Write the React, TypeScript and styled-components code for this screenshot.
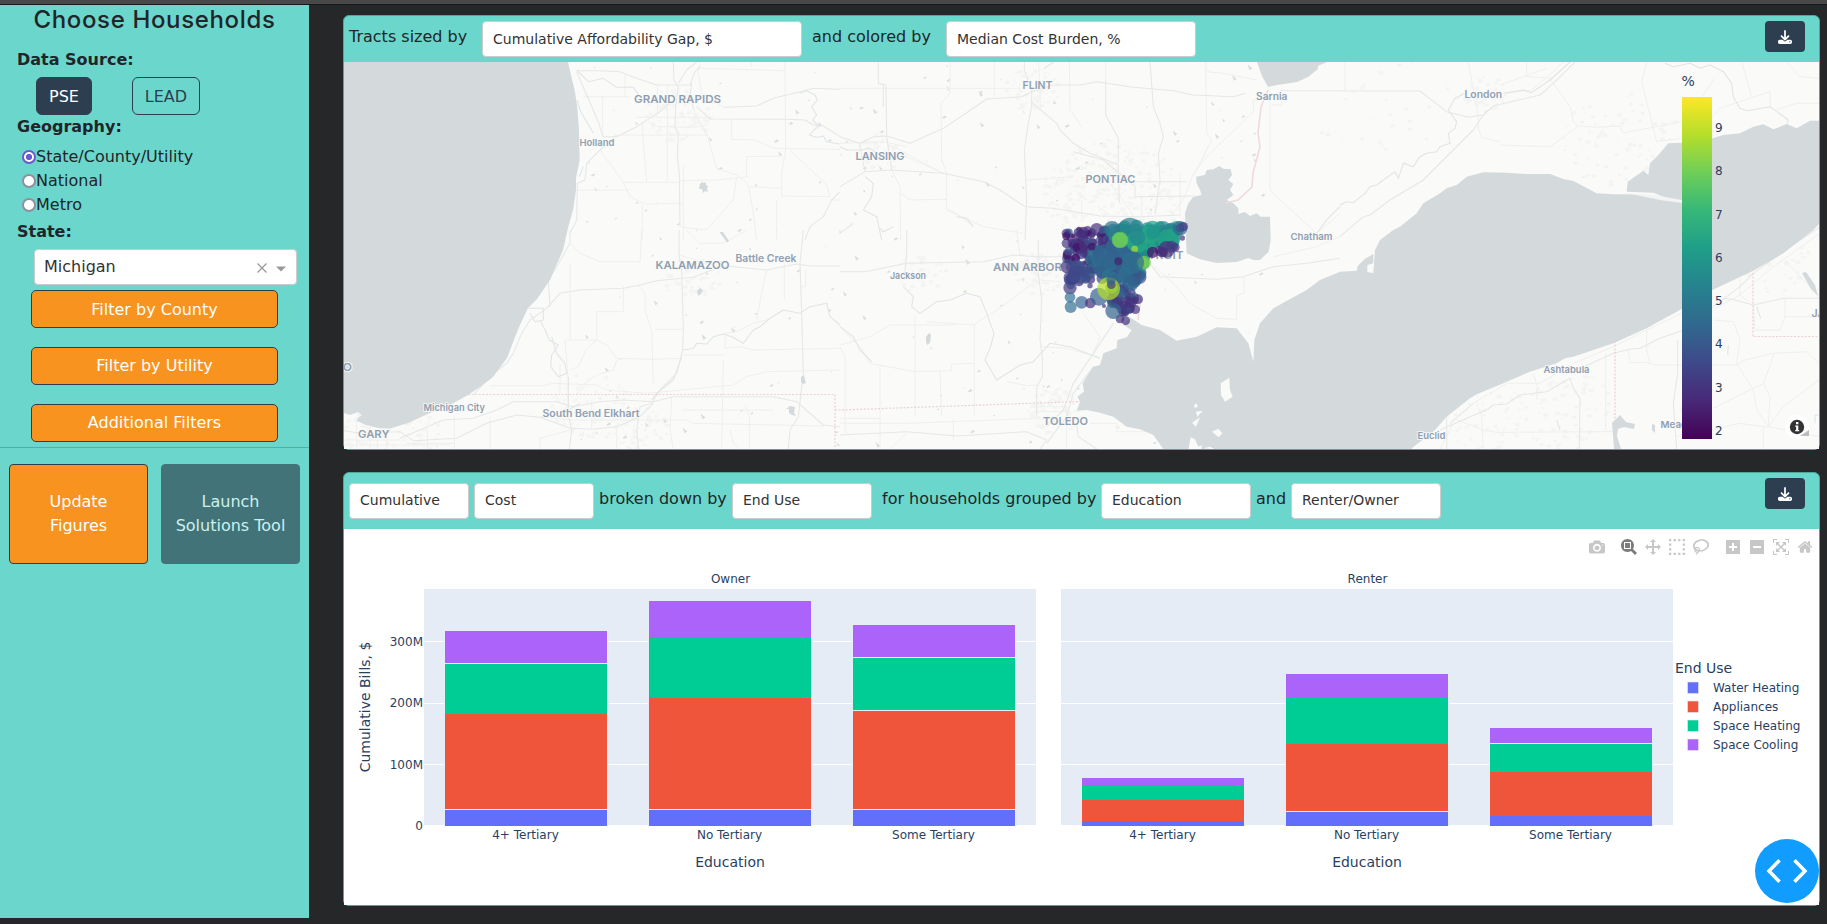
import React from 'react';
import styled, { createGlobalStyle } from 'styled-components';
import { FaDownload } from 'react-icons/fa6';

const TEAL = '#6bd7cc';
const NAVY = '#2c3e50';
const ORANGE = '#f7931e';
const SANS = '"DejaVu Sans", Verdana, sans-serif';

const GlobalStyle = createGlobalStyle`
  * { box-sizing: border-box; }
  body { margin: 0; background: #262729; color: #212529; font: 16px/24px ${SANS}; overflow: hidden; }
`;

const Page = styled.div`
  height: 924px;
  display: flex;
  flex-direction: column;
`;
const TopStrip = styled.div`
  height: 5px;
  background: #494949;
  border-bottom: 1px solid #17181a;
`;
const Main = styled.div`
  flex: 1;
  display: flex;
  gap: 34px;
`;
const Sidebar = styled.aside`
  width: 309px;
  height: 913px;
  background: ${TEAL};
`;
const Title = styled.h1`
  margin: 0;
  height: 43px;
  text-align: center;
  font: 500 24px/29px Inter, sans-serif;
  letter-spacing: 0.65px;
`;
const FieldLabel = styled.div<{ $top?: number }>`
  padding-left: 17px;
  margin-top: ${p => p.$top ?? 0}px;
  font-weight: bold;
  height: 24px;
`;
const SourceRow = styled.div`
  display: flex;
  gap: 40px;
  padding: 5px 0 0 36px;
`;
const SourceButton = styled.button<{ $active?: boolean; $w: number }>`
  width: ${p => p.$w}px;
  height: 38px;
  padding: 0;
  border: 1px solid ${NAVY};
  border-radius: 6px;
  background: ${p => (p.$active ? NAVY : 'transparent')};
  color: ${p => (p.$active ? '#fff' : NAVY)};
  font: 16px ${SANS};
`;
const RadioList = styled.div`
  padding: 6px 0 0 22px;
`;
const RadioRow = styled.label`
  display: flex;
  align-items: center;
  height: 24px;
`;
const Radio = styled.span<{ $on?: boolean }>`
  width: 14px;
  height: 14px;
  border-radius: 50%;
  border: 2px solid ${p => (p.$on ? '#6b58d3' : '#8f8f9d')};
  background: ${p => (p.$on ? 'radial-gradient(circle, #6b58d3 0 2.8px, #fff 3.4px)' : '#fff')};
`;
const StateSelect = styled.div`
  display: flex;
  align-items: center;
  width: 263px;
  height: 36px;
  margin: 5px 0 5px 34px;
  padding: 0 10px 1px 9px;
  border: 1px solid #ccc;
  border-radius: 4px;
  background: #fff;
  color: #333;
  svg { margin-top: 2px; }
`;
const Grow = styled.span`
  flex: 1;
`;
const FilterStack = styled.div`
  display: flex;
  flex-direction: column;
  gap: 19px;
  padding-left: 31px;
`;
const FilterButton = styled.button<{ $nudge?: number }>`
  width: 247px;
  height: 38px;
  padding: 0 0 ${p => p.$nudge ?? 0}px;
  border: 1px solid ${NAVY};
  border-radius: 5px;
  background: ${ORANGE};
  color: #fff;
  font: 16px ${SANS};
`;
const Rule = styled.div`
  height: 1px;
  margin: 5px 0 16px;
  background: #50b1a3;
`;
const ActionRow = styled.div`
  display: flex;
  gap: 13px;
  padding-left: 9px;
`;
const ActionButton = styled.button<{ $disabled?: boolean }>`
  width: 139px;
  height: 100px;
  padding: 0 6px;
  border: 1px solid ${p => (p.$disabled ? '#427379' : NAVY)};
  border-radius: 4px;
  background: ${p => (p.$disabled ? '#427379' : ORANGE)};
  color: ${p => (p.$disabled ? '#cbf1ed' : '#fff')};
  font: 16px/24px ${SANS};
`;
const Content = styled.main`
  display: flex;
  flex-direction: column;
  gap: 22px;
  padding-top: 10px;
  width: 1477px;
`;
const Card = styled.section`
  position: relative;
  border: 1px solid #4fa79b;
  border-radius: 6px;
  background: ${TEAL};
`;
const CardHeader = styled.header<{ $h: number; $pad: number }>`
  display: flex;
  align-items: flex-start;
  height: ${p => p.$h}px;
  padding: ${p => p.$pad}px 14px 0 5px;
`;
const Phrase = styled.span<{ $w: number }>`
  width: ${p => p.$w}px;
  padding-top: 4px;
  white-space: nowrap;
`;
const Select = styled.div<{ $w: number; $mr?: number; $lh?: number }>`
  width: ${p => p.$w}px;
  height: 36px;
  margin-right: ${p => p.$mr ?? 0}px;
  padding: 0 10px;
  border: 1px solid #ccc;
  border-radius: 4px;
  background: #fff;
  color: #333;
  font-size: 14px;
  line-height: ${p => p.$lh ?? 34}px;
  white-space: nowrap;
`;
const DownloadButton = styled.button<{ $lift?: number }>`
  display: flex;
  align-items: center;
  justify-content: center;
  width: 40px;
  height: 31px;
  margin: -${p => p.$lift ?? 0}px 0 0 auto;
  border: 0;
  border-radius: 4px;
  background: ${NAVY};
  color: #fff;
  font-size: 14px;
`;
const Body = styled.div<{ $h: number }>`
  height: ${p => p.$h}px;
  background: #fff;
  svg { display: block; }
`;
const ModeBar = styled.div`
  position: absolute;
  top: 66px;
  right: 2px;
  display: flex;
`;
const ModeCell = styled.span<{ $active?: boolean; $gap?: boolean }>`
  width: 24px;
  margin-left: ${p => (p.$gap ? 8 : 0)}px;
  display: flex;
  justify-content: center;
  color: ${p => (p.$active ? '#7c7c7c' : '#c7c7c7')};
`;
const DevButton = styled.button`
  position: fixed;
  left: 1755px;
  top: 839px;
  width: 64px;
  height: 64px;
  padding: 0;
  border: 0;
  border-radius: 50%;
  background: #119dff;
  svg { display: block; }
`;

/* ---------- map ---------- */

const tiles: { x: number; y: number; roads: string[]; minor: string[]; rivers: string[] }[] = [
  {
    x: 340, y: 0,
    roads: [
      'M1000 186 1002 240 1015 260 1007 320 1005 380 1015 400 1012 470 1018 520 1020 680',
      'M1070 186 1040 210 1015 250', 'M1070 320 1110 357 1340 358 1395 360 1420 375 1450 378 1500 410',
      'M1055 250 1050 290 1062 330', 'M710 215 740 285 775 365 788 410 830 410 890 380 960 335 1000 300',
      'M830 405 780 450 740 490 735 540 712 550 710 660 690 700',
      'M710 212 780 212 840 215 880 232 950 255 1050 255 1065 215 1080 200',
      'M1500 575 1475 600 1450 650 1410 680 1395 720', 'M1150 322 1250 318 1300 295 1380 275 1420 265 1500 268',
    ],
    minor: [
      'M1080 205 1335 212', 'M1335 186 1337 450 1325 520 1325 588 1470 590', 'M730 290H870', 'M788 290V410',
      'M840 405H1100L1060 340', 'M885 352H1110L1100 375 1060 382 960 380 930 372', 'M908 365V405L920 545',
      'M848 547H1015', 'M780 450 850 547 870 590 915 612 1028 610', 'M907 615V720', 'M1062 330 1100 400 1130 505 1190 525 1225 555 1240 640 1250 720',
      'M1175 360V418L1245 420 1300 445 1500 448', 'M1330 468 1220 470V530', 'M1350 450 1460 555 1470 590',
      'M1018 542 1130 540 1225 530', 'M1230 560 1325 565', 'M1470 600H1500', 'M1310 600V720', 'M712 570H865',
      'M1190 530 1180 600 1100 690 1028 682', 'M982 260V545', 'M1030 500V720', 'M855 225V290', 'M952 260V350', 'M1235 186V200',
      'M1080 186 1075 220 1085 280 1150 322',
    ],
    rivers: ['M1380 280 1400 272 1425 285 1432 300 1415 320 1430 345 1418 360 1436 378 1420 392 1408 405 1430 412 1450 408 1460 425 1500 432', 'M710 210 745 245 790 235 830 262 880 262 900 290', 'M712 300 720 330 760 400', 'M730 500 718 530'],
  },
  {
    x: 840, y: 0,
    roads: [
      'M115 186V250L138 255 140 410 155 510', 'M60 430 100 410 140 408 210 430 310 385 370 345 440 297 545 290 575 275 640 255 720 255 770 245 880 262 1000 272 1060 285 1180 290 1215 280',
      'M553 186V210L575 270 575 320 565 370 553 450 560 600 555 720', 'M575 305 600 328 650 370 660 390 700 430 750 460 835 495 838 610',
      'M75 515 150 510 310 520 430 545 480 570 555 620 640 625 780 648 900 650 1020 645', 'M797 240V345L835 415V490',
      'M930 186 940 320 960 370 970 410 955 460 960 540 945 640', 'M1320 272H1500', 'M885 545H1040', 'M700 455 790 480 885 560V590L1060 588',
      'M0 560 75 515 58 430 0 410', 'M115 250 130 255V320',
    ],
    minor: [
      'M0 265H545', 'M595 186 600 260V330', 'M688 186 690 330 725 380', 'M797 240V186', 'M1240 335 1100 470 1060 520 1030 600 990 650',
      'M1240 335V300L1320 290', 'M1290 290V570L1310 590 1430 700 1500 640', 'M1097 186V215L1150 220 1250 240', 'M1097 186 1100 400 1115 420 1085 480',
      'M815 555 880 645', 'M725 600V650', 'M330 186V280L303 310 305 480 320 520V630L430 680 550 700', 'M155 510 180 560 182 720',
      'M182 580 210 600 320 598', 'M463 186V290', 'M775 620 810 645', 'M905 590V650', 'M1020 520V650', 'M1295 315H1325V290', 'M560 540 700 530', 'M320 630 340 635 400 678', 'M140 430 310 520',
      'M0 430 130 425 200 440', 'M155 450 310 520', 'M1105 440 1085 480 1060 530',
    ],
    rivers: ['M0 440 20 450 60 450 90 445 130 470', 'M75 530 100 550 95 590 70 630 110 650 125 720', 'M640 186 612 206', 'M1500 620 1460 660 1430 700', 'M400 680 380 655 350 650'],
  },
  {
    x: 1340, y: 0,
    roads: ['M0 273H240L320 335 385 352 430 345 460 318 600 285 640 250 705 186', 'M0 710 70 650 90 645 150 600 200 570 250 540 400 390 440 330'],
    minor: [
      'M490 295 495 280 575 270 640 215 670 186', 'M630 235 690 320 700 365 715 378 770 382 838 378 850 398 940 382 1025 365',
      'M715 378 630 440 480 435', 'M480 425 425 412 415 385 415 350 385 186', 'M480 255 620 205', 'M920 186 905 245 950 425 1025 415',
      'M560 186V230L640 235', 'M1205 186 1235 290', 'M1117 350 1140 325 1290 275V320', 'M1340 186 1380 230 1437 235',
      'M1437 310H1370L1310 330', 'M15 186V273', 'M1125 235 1085 290', 'M460 260 495 315',
    ],
    rivers: ['M0 615 20 605 40 608 75 580 90 560 110 555 130 540 165 515 175 535 190 490 220 500 240 470 260 460 290 455 300 440 330 430 325 400 345 385 350 365 325 330 345 295 375 280', 'M490 280 550 270 575 278 630 240 690 186', 'M975 190 1000 200 1050 190 1080 205 1110 195 1150 215 1175 250 1180 290 1200 325 1220 332 1290 320 1345 360 1340 375'],
  },
  {
    x: 340, y: 230,
    roads: [
      'M1017 0V75L1025 120 1030 300 1028 360 1010 430 960 480 935 520 900 530',
      'M400 495 450 440 500 400 520 370 545 310 570 270 620 235 660 190 720 180 850 175 900 165 950 152 1060 142 1130 115 1160 108 1280 120 1370 102 1410 108 1500 108',
      'M690 0 690 40 650 110 625 150 630 230', 'M1390 0 1380 100 1385 250 1390 430 1375 560 1350 600 1345 657',
      'M180 625 310 570 400 565 470 540 520 515 650 515 700 530 780 515 850 510 940 515 1000 500 1300 500 1370 515 1450 585 1500 590',
      'M0 600 60 610 180 605 220 632 350 625 440 580 530 555 600 562 690 595 760 598 830 590 900 560 940 520',
      'M685 460 685 555 695 600 688 657', 'M900 530 890 600 895 657',
    ],
    minor: [
      'M690 40 720 70 780 95 900 95 905 0', 'M690 100V330', 'M450 467H610L640 460 770 465 800 480 920 490 1180 465 1220 440 1280 425 1500 420',
      'M600 560 690 570 1040 570 1060 580 1450 588', 'M680 330H770V245H850V170', 'M675 330 685 460', 'M770 330 800 345 830 385 940 388 1020 385',
      'M770 330 740 355 715 410 690 420', 'M830 390 820 420 770 435 720 470 710 460', 'M895 165 915 190 915 240 935 300 940 460', 'M945 298H1030',
      'M1030 375 1150 375', 'M1155 310V355L1200 350 1240 360 1500 355', 'M1150 390 1145 657', 'M1280 120 1265 190 1250 270', 'M1333 100V210',
      'M1155 310 1190 305 1240 280 1280 270 1330 240', 'M1017 75 1130 110', 'M1040 0 1080 40 1150 40 1220 0', 'M995 500 990 600 1000 657',
      'M755 515V598', 'M650 490V515', 'M343 560V657', 'M262 590V657', 'M112 600V657', 'M50 560V657', 'M0 630H180', 'M200 640H340', 'M450 560V657',
      'M600 657V625L690 600', 'M830 590V657', 'M1170 600 1180 640 1200 657', 'M1215 525 1228 560V657', 'M660 400V490', 'M1385 170H1397V120',
      'M0 645H330', 'M90 590V657', 'M140 600V657', 'M1025 540H1300',
    ],
    rivers: [
      'M1030 360 1060 355 1070 340 1100 342 1120 320 1150 312 1175 320 1210 340 1240 300 1260 290 1290 265 1330 240 1380 250 1410 230 1460 220 1470 260 1500 285',
      'M565 235H610V270L585 275 570 250', 'M600 270 615 300 628 330 655 345 635 375 632 410 655 440 680 430 675 400 650 370 635 320', 'M685 440V540L720 520', 'M935 510 950 490 1000 450 1025 380',
    ],
  },
  {
    x: 840, y: 230,
    roads: [
      'M0 125H75L200 100 430 95 520 75 590 80 680 80', 'M595 30 595 130 605 210 600 330 607 380 607 440 590 470V560', 'M820 280 780 340 760 370 700 460 670 540 620 590',
      'M0 615 200 605 350 618 560 605 620 630 600 657', 'M925 95 960 140 1130 148 1210 140 1300 110 1400 100 1500 85', 'M760 410 700 490 680 560 620 640', 'M710 580 715 620 770 657', 'M200 0V70L195 130',
    ],
    minor: [
      'M260 275 400 285 500 220 590 150', 'M0 345 90 320 150 285 350 285', 'M0 290 60 350 90 400 225 425 335 422 335 402 400 400', 'M500 455 560 467 595 465',
      'M600 350 680 355 770 380', 'M0 580H200L600 565', 'M120 405V657', 'M225 260V560', 'M300 425 305 560', 'M403 285V560', 'M340 565V630',
      'M945 110 1000 160 1050 220 1130 265 1190 268V195L1212 190V140', 'M1300 80 1430 50 1500 20', 'M750 580H830V605H950', 'M0 350 15 380V610', 'M600 530H680V657',
      'M200 610 150 657', 'M560 90 600 150 660 155', 'M540 75 530 0', 'M730 250 780 320 760 370', 'M590 545H690', 'M0 565H120',
    ],
    rivers: ['M190 170 220 200 215 230 240 250 290 215 330 210 380 190 420 200 440 250 462 310 452 350 435 390 470 450 540 405 580 395 630 340 690 350 780 385', 'M0 0 0 10 40 -20', 'M0 290 40 320 60 360 95 395', 'M120 -5 130 5 160 -10'],
  },
  {
    x: 1340, y: 230,
    roads: [
      'M300 600 380 565 440 540 460 525 500 522 540 495 620 485 690 445 700 475 720 505 718 657', 'M330 580 400 520', 'M820 370 870 358 900 355 960 325 1025 302',
      'M1013 330V430L1000 520 1010 657', 'M1117 232 1200 170 1240 130 1330 65 1437 -8', 'M320 657V565', 'M820 370 690 430', 'M1150 205 1175 208 1240 225 1330 205 1437 205',
    ],
    minor: [
      'M400 520 500 460 600 460 700 400 820 350 920 300 1025 250', 'M350 570 430 600 470 607 820 605', 'M410 520 425 560 430 657', 'M580 430 592 470 590 510',
      'M865 360 870 398H920L945 405H1190L1215 390 1300 370 1400 365 1437 400', 'M1117 240 1200 195 1300 110 1437 12', 'M1120 270 1180 275 1200 330 1190 400 1240 480 1250 540 1285 590 1330 530 1437 450',
      'M1120 535 1270 460 1290 500 1285 590 1437 620', 'M1040 615 1200 580 1285 592', 'M1335 90 1400 160 1437 200', 'M1335 205V260H1437', 'M797 370V600', 'M1303 370 1270 460',
      'M1200 145V195L1225 215', 'M1240 225 1245 300H1320L1335 260', 'M920 300V360L930 400', 'M300 657 340 580', 'M1020 530 1050 600 1010 620', 'M1270 590V657',
    ],
    rivers: ['M650 570 660 600', 'M1165 345 1163 375', 'M1250 230 1262 265', 'M1437 555 1425 555 1425 580'],
  },
];

const makeRandom = (seed: number) => () => {
  seed = (seed * 1664525 + 1013904223) % 4294967296;
  return seed / 4294967296;
};

const rand = makeRandom(7);
const ponds = Array.from({ length: 190 }, () => {
  const x = 575 + rand() * 690;
  const y = 64 + rand() * 380;
  const s = 0.8 + rand() * 2.4;
  const dir = rand() > 0.4 ? -1 : 1;
  return `M${x.toFixed(1)} ${y.toFixed(1)}l${s.toFixed(1)} ${(dir * s * 0.8).toFixed(1)} ${(s * 0.6).toFixed(1)} ${(s * 0.5).toFixed(1)} ${(-s).toFixed(1)} ${(s * 0.6).toFixed(1)}z`;
}).join('');

const cities: [number, number, number, number][] = [
  [675, 115, 34, 90], [880, 150, 24, 60], [1030, 90, 28, 60], [1110, 195, 70, 360], [1040, 270, 30, 80], [1053, 410, 28, 90],
  [1483, 92, 22, 50], [590, 405, 42, 90], [640, 428, 28, 60], [390, 438, 50, 110], [690, 278, 28, 50], [1565, 410, 50, 90], [1620, 140, 60, 90], [1480, 420, 50, 70], [920, 275, 26, 40], [1770, 260, 40, 40], [1390, 110, 80, 40],
];
const urban = cities
  .map(([cx, cy, r, n]) =>
    Array.from({ length: n }, () => {
      const a = rand() * 6.283;
      const d = r * Math.sqrt(rand());
      const s = 1 + rand() * 4;
      return `M${(cx + Math.cos(a) * d).toFixed(1)} ${(cy + Math.sin(a) * d * 0.8).toFixed(1)}l${s.toFixed(1)} -1 1 ${(s * 0.7).toFixed(1)} -${s.toFixed(1)} 1z`;
    }).join('')
  )
  .join('');

const lakeMichigan =
  'M344 62H568L571 75 575 92 577 105 579 130 579.7 160 576 178 576 190 573 210 568 228 563 250 550 280 537 299 528 308 520 325 515 337 507 358 493 377 480 387 468 395 450 405 430 413 408 423 390 428.5 378 428 366 425 357 421 358 418 362 415 358 412 350 415 344 413Z';
const lakeHuron = 'M1257 62 1262 76 1268 87 1277 85 1297 82 1308 77 1313 73 1318 69V66L1327 62Z';
const lakeStClair =
  'M1070 550 1068 530 1095 525 1100 510 1120 508 1138 498 1150 506 1172 508 1176 525 1165 540 1180 552 1170 570 1180 585 1160 600 1180 610 1195 625 1195 642 1215 636 1230 648 1250 640 1262 650 1290 650 1292 720 1286 755 1260 780 1240 780 1225 774 1190 786 1130 789 1080 778 1040 760 1035 640 1045 610 1060 590 1085 585 1080 570Z';
const erieWest =
  'M870 262 905 285 960 300 1010 332 1070 320 1130 292 1190 295 1225 340 1240 395 1243 330 1260 280 1300 235 1400 180 1440 150 1500 125 1550 122 1553 108 1575 86 1600 72 1600 100 1582 105 1582 126 1600 130 1605 60 1620 30 1660 0 1680 -10 1730 -50 1750 -80 1800 -110 1820 -125 1850 -135 1880 -160 1930 -173 2000 -172 2060 -168 2130 -168 2170 -153 2200 -147 2270 -110 2320 -107 2360 -107 2420 -105 2540 -84 2480 -95 2440 -112 2360 -115 2363 -145 2410 -178 2425 -165 2430 -200 2455 -225 2485 -260 2525 -262 2617 -275 2650 -285 2700 -290 2740 -310 2770 -317 2800 -302 2840 -318 2870 -305 2910 -328 2937 -328V-18L2920 0 2830 70 2740 122 2617 180 2530 235 2480 262 2420 295 2320 340 2200 380 2175 385 2150 400 2070 425 1990 460 1910 493 1890 505 1820 560 1780 605 1715 655V660H972L940 615 900 598 860 590 820 560 780 548 740 540 710 542 720 515 712 500 732 485 728 460 740 440 760 410 780 405 790 370 830 355 832 330 860 322 875 300 850 285Z';
const islands =
  'M1142 460 1168 443 1170 480 1178 500 1155 515 1143 495ZM1062 525 1070 520 1074 530 1064 534ZM1068 545 1088 542 1072 560ZM1056 578 1080 562 1068 590ZM1116 605 1135 596 1147 610 1136 622ZM1045 660 1052 622 1065 628 1075 650 1085 645V660ZM1090 655 1110 650 1125 658Z';

interface Place { t: string; x: number; y: number; w: number; s: number }
const places: Place[] = [
  { t: 'GRAND RAPIDS', x: 634, y: 102.5, w: 87, s: 11 },
  { t: 'Holland', x: 579.5, y: 146, w: 35, s: 9.5 },
  { t: 'LANSING', x: 855.5, y: 159.5, w: 49, s: 11 },
  { t: 'FLINT', x: 1022.5, y: 89, w: 30, s: 11 },
  { t: 'PONTIAC', x: 1085.5, y: 183, w: 50, s: 11 },
  { t: 'Sarnia', x: 1256, y: 99.5, w: 31.5, s: 10 },
  { t: 'London', x: 1464.5, y: 97.5, w: 37.5, s: 10 },
  { t: 'Chatham', x: 1290.5, y: 240, w: 42, s: 9.5 },
  { t: 'KALAMAZOO', x: 655.5, y: 268.5, w: 74, s: 11 },
  { t: 'Battle Creek', x: 735.5, y: 261.5, w: 61, s: 10 },
  { t: 'Jackson', x: 890, y: 279, w: 36, s: 9.5 },
  { t: 'ANN ARBOR', x: 993, y: 271, w: 69, s: 11 },
  { t: 'DETROIT', x: 1132, y: 259, w: 51.5, s: 11 },
  { t: 'Michigan City', x: 423.5, y: 411, w: 61.5, s: 9.5 },
  { t: 'South Bend Elkhart', x: 542.5, y: 417, w: 97, s: 10 },
  { t: 'GARY', x: 358, y: 437.5, w: 31.5, s: 11 },
  { t: 'TOLEDO', x: 1043, y: 425, w: 45, s: 11 },
  { t: 'Ashtabula', x: 1543.5, y: 373, w: 46, s: 9.5 },
  { t: 'Euclid', x: 1417.5, y: 439, w: 28, s: 9.5 },
  { t: 'Meadville', x: 1660.5, y: 427.5, w: 46, s: 9.5 },
  { t: 'JAMESTOWN', x: 1811.5, y: 316.5, w: 70, s: 10 },
  { t: 'CHICAGO', x: 296, y: 371, w: 56, s: 11 },
];

type Dot = [number, number, number, string];
type Pt = [number, number];
const inside = (x: number, y: number, poly: Pt[]) => {
  let hit = false;
  for (let i = 0, j = poly.length - 1; i < poly.length; j = i++) {
    const [xi, yi] = poly[i];
    const [xj, yj] = poly[j];
    if (yi > y !== yj > y && x < ((xj - xi) * (y - yi)) / (yj - yi) + xi) hit = !hit;
  }
  return hit;
};
const scatter = (seed: number, n: number, poly: Pt[], rMin: number, rMax: number, colors: string[]): Dot[] => {
  const next = makeRandom(seed);
  const xs = poly.map(p => p[0]);
  const ys = poly.map(p => p[1]);
  const out: Dot[] = [];
  while (out.length < n) {
    const x = Math.min(...xs) + next() * (Math.max(...xs) - Math.min(...xs));
    const y = Math.min(...ys) + next() * (Math.max(...ys) - Math.min(...ys));
    if (inside(x, y, poly)) out.push([x, y, rMin + next() * (rMax - rMin), colors[Math.floor(next() * colors.length)]]);
  }
  return out;
};
const dots: Dot[] = [
  [109, 100, 14, '#443983'], [109, 130, 14, '#443983'], [128, 131, 15, '#443983'], [147, 88, 8, '#440154'], [200, 88, 19, '#46327e'], [120, 263, 20, '#443983'], [112, 200, 20, '#46327e'],
  ...scatter(11, 130, [[108, 95], [230, 85], [250, 130], [220, 210], [150, 220], [108, 205]], 7, 15, ['#46307e', '#472d7b', '#440f6a', '#443983', '#3b528b']),
  ...scatter(5, 26, [[115, 200], [200, 190], [250, 240], [180, 240], [115, 265]], 12, 20, ['#3b4f8a', '#3e4989', '#33638d', '#46327e']),
  [120, 292, 16, '#35739a'], [122, 321, 18, '#32709a'], [155, 307, 19, '#38659a'], [181, 309, 16, '#46327e'], [207, 290, 27, '#355f92'], [222, 318, 6, '#46327e'],
  ...scatter(23, 60, [[240, 225], [325, 240], [318, 300], [298, 335], [275, 350], [245, 325]], 11, 18, ['#46327e', '#443983', '#3b528b', '#414487', '#33638d']),
  [324, 298, 15, '#46327e'], [316, 328, 14, '#46327e'], [287, 362, 13, '#46327e'], [270, 357, 13, '#46327e'], [250, 333, 24, '#33638d'],
  ...scatter(31, 85, [[240, 85], [300, 76], [340, 80], [445, 80], [452, 100], [420, 135], [360, 145], [335, 200], [320, 220], [270, 170], [240, 120]], 16, 25, ['#21918c', '#1f9e89', '#26828e', '#25858e', '#22a884']),
  ...scatter(8, 30, [[290, 150], [340, 150], [338, 215], [310, 240], [285, 215]], 14, 22, ['#2a788e', '#21918c', '#26828e']),
  ...scatter(42, 42, [[188, 155], [265, 130], [330, 185], [315, 215], [230, 220], [188, 190]], 16, 26, ['#31688e', '#33638d', '#355f8d', '#2c728e']),
  ...scatter(77, 16, [[225, 225], [300, 215], [335, 225], [320, 260], [240, 235]], 13, 22, ['#31688e', '#3b528b', '#2d708e']),
  [300, 90, 37, '#26828e'], [246, 88, 25, '#2d708e'], [362, 105, 27, '#22a884'], [414, 118, 31, '#22a884'], [370, 95, 22, '#21918c'], [322, 125, 33, '#25ab82'],
  [342, 188, 21, '#7ad151'], [340, 188, 16, '#7ad151'], [270, 120, 25, '#6ece58'], [270, 120, 22, '#6ece58'], [314, 147, 10, '#b5de2b'], [322, 112, 24, '#25858e'], [228, 170, 38, '#31648e'], [308, 188, 34, '#2d708e'],
  [302, 250, 24, '#31608e'], [450, 85, 22, '#31688e'], [460, 80, 14, '#443983'], [450, 84, 13, '#3b4f8a'], [457, 114, 8, '#443983'],
  [395, 155, 16, '#46327e'], [400, 158, 14, '#472d7b'], [386, 150, 12, '#46327e'], [436, 142, 13, '#46327e'],
  [410, 148, 25, '#472d7b'], [425, 140, 18, '#443983'], [368, 157, 17, '#440f6a'], [265, 184, 12, '#46206e'], [185, 140, 11, '#440f6a'],
  [236, 266, 34, '#b5de2b'], [244, 262, 19, '#9fd738'], [244, 254, 13, '#443983'], [243, 240, 14, '#33638d'], [180, 257, 8, '#443983'],
];

const viridis = ['#440154', '#482878', '#3e4989', '#31688e', '#26828e', '#1f9e89', '#35b779', '#6ece58', '#b5de2b', '#fde725'];

const TractMap = () => (
  <svg width="1475" height="387" viewBox="344 62 1475 387">
    <defs>
      <linearGradient id="scale" x1="0" y1="1" x2="0" y2="0">
        {viridis.map((c, i) => <stop key={c} offset={i / 9} stopColor={c} />)}
      </linearGradient>
    </defs>
    <rect x="344" y="62" width="1475" height="387" fill="#fafaf8" />
    <path d={urban} fill="#f4f4f3" />
    <path d={ponds} fill="#d9dee0" />
    {tiles.map(t => (
      <g key={`${t.x}-${t.y}`} transform={`translate(${t.x} ${t.y}) scale(.33333)`} fill="none" strokeLinejoin="round">
        <path d={t.minor.join('')} stroke="#efefee" strokeWidth="3" />
        <path d={t.rivers.join('')} stroke="#e0e5e7" strokeWidth="3.2" />
        <path d={t.roads.join('')} stroke="#e6e7e7" strokeWidth="3.2" />
      </g>
    ))}
    <g fill="#d4dadc">
      <path d={lakeMichigan} />
      <path d={lakeHuron} />
      <path d={lakeStClair} transform="translate(840 0) scale(.33333)" />
      <path d={erieWest} transform="translate(840 230) scale(.33333)" />
      <path d="M719.500 232 723 232 729 241 727 242.500ZM1617 418 1620 415 1626 422 1635 424 1634 429 1624 427 1618 429 1617 436 1621 449H1614L1612 423ZM1652 424 1655 425 1655 433 1652 430ZM1802 273 1806 272 1815 285 1818 296 1811 289Z" />
      <path d="M700 184l2-2 2 1 2-1v3l2 1-1 3 1 3-3-1-2 2-1-4-3 0zM801 377l3-2 1 5 1 3-3 1-2-2zM786 409l4-3 5 1-1 6 2 3-4-1-3-2 0-4zM697 291l3-3 3 2-2 4-3 2zM926 337l3-4 2 2-1 8-3 2-1-4z" />
    </g>
    <path d={islands} fill="#fafaf8" transform="translate(840 230) scale(.33333)" />
    <path d="M1626 193 1650 194.500 1682 200V203L1660 200Z" fill="#f2f4f3" />
    <g fill="none">
      <g stroke="#ecd0d5" strokeWidth="1.2" strokeDasharray="2 1.6">
        <path d="M468 394.500H835V449M835 410H840L1081 401.500" />
        <path d="M1615 341V423M1753 273V336.500H1819" />
      </g>
      <path d="M1268 90 1261 107 1258 133 1260 147 1253 173 1252 187 1238 200 1226 203M1141 297 1138 320" stroke="#efdadd" strokeWidth="1.6" />
    </g>
    <g fontFamily="Inter, sans-serif" fontWeight="600" fill="#8f9fb1" stroke="#fafaf8" strokeWidth="2" strokeOpacity=".8" strokeLinejoin="round" paintOrder="stroke">
      {places.map(p => (
        <text key={p.t} x={p.x} y={p.y} fontSize={p.s} textLength={p.w} lengthAdjust="spacingAndGlyphs">{p.t}</text>
      ))}
    </g>
    <g transform="translate(1030 200) scale(.33333)" fillOpacity=".7">
      {dots.map(([x, y, r, c], i) => <circle key={i} cx={x} cy={y} r={r} fill={c} />)}
    </g>
    <rect x="1682" y="97" width="30" height="342" fill="url(#scale)" />
    <g fontFamily={SANS} fill="#2a3f5f">
      <text x="1681.500" y="86" fontSize="14">%</text>
      {[9, 8, 7, 6, 5, 4, 3, 2].map((n, i) => (
        <text key={n} x="1715" y={132 + i * 43.25} fontSize="12">{n}</text>
      ))}
    </g>
    <circle cx="1797" cy="427" r="12" fill="#fff" fillOpacity=".8" />
    <path d="M1809 430V436H1800Z" fill="#b9bcbd" />
    <circle cx="1797" cy="427" r="7.200" fill="#333" />
    <path d="M1796 422h2.400v2.200h-2.400zM1795.300 425.500h3v4.500h.9v1.300h-4v-1.300h.9v-3.200h-.8z" fill="#fff" />
  </svg>
);

/* ---------- bar chart ---------- */

const series = [
  { name: 'Water Heating', color: '#636efa' },
  { name: 'Appliances', color: '#ef553b' },
  { name: 'Space Heating', color: '#00cc96' },
  { name: 'Space Cooling', color: '#ab63fa' },
];

// top and bottom of each segment, in series order
const facets = [
  {
    title: 'Owner', x: 424,
    bars: [
      { label: '4+ Tertiary', seg: [[810, 826], [714, 809], [664, 714], [631, 663]] },
      { label: 'No Tertiary', seg: [[810, 826], [698, 809], [637, 698], [601, 637]] },
      { label: 'Some Tertiary', seg: [[810, 826], [711, 809], [658, 710], [625, 657]] },
    ],
  },
  {
    title: 'Renter', x: 1061,
    bars: [
      { label: '4+ Tertiary', seg: [[821, 826], [800, 821], [785, 800], [778, 785]] },
      { label: 'No Tertiary', seg: [[812, 826], [744, 811], [698, 744], [674, 698]] },
      { label: 'Some Tertiary', seg: [[816, 826], [772, 816], [744, 772], [728, 743]] },
    ],
  },
];

const BillsChart = () => (
  <svg width="1475" height="376" viewBox="344 529 1475 376" fontFamily={SANS} fill="#2a3f5f" fontSize="12">
    {facets.map(f => (
      <g key={f.title}>
        <rect x={f.x} y="589" width="612" height="237" fill="#e5ecf6" />
        {[641, 703, 764, 825].map(y => <rect key={y} x={f.x} y={y} width="612" height="1" fill="#fff" />)}
        {f.bars.map((b, i) => {
          const x = f.x + 21 + i * 204;
          const top = b.seg[3][0];
          return (
            <g key={b.label}>
              <rect x={x - 1} y={top - 1} width="164" height={827 - top} fill="#e5ecf6" />
              {b.seg.map(([y0, y1], s) => <rect key={s} x={x} y={y0} width="162" height={y1 - y0} fill={series[s].color} />)}
              <text x={x + 80.5} y="839" textAnchor="middle">{b.label}</text>
            </g>
          );
        })}
        <text x={f.x + 306.5} y="583" textAnchor="middle">{f.title}</text>
        <text x={f.x + 306} y="867" textAnchor="middle" fontSize="14">Education</text>
      </g>
    ))}
    <g textAnchor="end">
      <text x="423" y="646">300M</text>
      <text x="423" y="707">200M</text>
      <text x="423" y="769">100M</text>
      <text x="423" y="830">0</text>
    </g>
    <text transform="translate(370 707) rotate(-90)" textAnchor="middle" fontSize="14">Cumulative Bills, $</text>
    <text x="1675" y="673" fontSize="14">End Use</text>
    {series.map((s, i) => (
      <g key={s.name}>
        <rect x="1687.500" y={682 + i * 19} width="11" height="11.500" fill={s.color} stroke="#e5ecf6" strokeOpacity=".6" />
        <text x="1713" y={692 + i * 19}>{s.name}</text>
      </g>
    ))}
  </svg>
);

const modeIcons: { d: string; w: number; gap?: boolean; active?: boolean }[] = [
  { w: 1000, d: 'm500 450c-83 0-150-67-150-150 0-83 67-150 150-150 83 0 150 67 150 150 0 83-67 150-150 150z m400 150h-120c-16 0-34 13-39 29l-31 93c-6 15-23 28-40 28h-340c-16 0-34-13-39-28l-31-94c-6-15-23-28-40-28h-120c-55 0-100-45-100-100v-450c0-55 45-100 100-100h800c55 0 100 45 100 100v450c0 55-45 100-100 100z m-400-550c-138 0-250 112-250 250 0 138 112 250 250 250 138 0 250-112 250-250 0-138-112-250-250-250z m365 380c-19 0-35 16-35 35 0 19 16 35 35 35 19 0 35-16 35-35 0-19-16-35-35-35z' },
  { w: 1000, gap: true, active: true, d: 'm1000-25l-250 251c40 63 63 138 63 218 0 224-182 406-407 406-224 0-406-182-406-406s183-406 407-406c80 0 155 22 218 62l250-250 125 125z m-812 250l0 438 437 0 0-438-437 0z m62 375l313 0 0-312-313 0 0 312z' },
  { w: 1000, d: 'm1000 350l-187 188 0-125-250 0 0 250 125 0-188 187-187-187 125 0 0-250-250 0 0 125-188-188 186-187 0 125 252 0 0-250-125 0 187-188 188 188-125 0 0 250 250 0 0-126 187 188z' },
  { w: 1000, d: 'm0 850l0-143 143 0 0 143-143 0z m286 0l0-143 143 0 0 143-143 0z m285 0l0-143 143 0 0 143-143 0z m286 0l0-143 143 0 0 143-143 0z m-857-286l0-143 143 0 0 143-143 0z m857 0l0-143 143 0 0 143-143 0z m-857-285l0-143 143 0 0 143-143 0z m857 0l0-143 143 0 0 143-143 0z m-857-286l0-143 143 0 0 143-143 0z m286 0l0-143 143 0 0 143-143 0z m285 0l0-143 143 0 0 143-143 0z m286 0l0-143 143 0 0 143-143 0z' },
  { w: 1031, d: 'm1018 538c-36 207-290 336-568 286-277-48-473-256-436-463 10-57 36-108 76-151-13-66 11-137 68-183 34-28 75-41 114-42l-55-70 0 0c-2-1-3-2-4-3-10-14-8-34 5-45 14-11 34-8 45 4 1 1 2 3 2 5l0 0 113 140c16 11 31 24 45 40 4 3 6 7 8 11 48-3 100 0 151 9 278 48 473 255 436 462z m-624-379c-80 14-149 48-197 96 42 42 109 47 156 9 33-26 47-66 41-105z m-187-74c-19 16-33 37-39 60 50-32 109-55 174-68-42-25-95-24-135 8z m360 75c-34-7-69-9-102-8 8 62-16 128-68 170-73 59-175 54-244-5-9 20-16 40-20 61-28 159 121 317 333 354s407-60 434-217c28-159-121-318-333-355z' },
  { w: 875, gap: true, d: 'm1 787l0-875 875 0 0 875-875 0z m687-500l-187 0 0-187-125 0 0 187-188 0 0 125 188 0 0 187 125 0 0-187 187 0 0-125z' },
  { w: 875, d: 'm0 788l0-876 875 0 0 876-875 0z m688-500l-500 0 0 125 500 0 0-125z' },
  { w: 1000, d: 'm250 850l-187 0-63 0 0-62 0-188 63 0 0 188 187 0 0 62z m688 0l-188 0 0-62 188 0 0-188 62 0 0 188 0 62-62 0z m-875-938l0 188-63 0 0-188 0-62 63 0 187 0 0 62-187 0z m875 188l0-188-188 0 0-62 188 0 62 0 0 62 0 188-62 0z m-125 188l-1 0-93-94-156 156 156 156 92-93 2 0 0 250-250 0 0-2 93-92-156-156-156 156 94 92 0 2-250 0 0-250 0 0 93 93 157-156-157-156-93 94 0 0 0-250 250 0 0 0-94 93 156 157 156-157-93-93 0 0 250 0 0 250z' },
  { w: 928.6, d: 'm786 296v-267q0-15-11-26t-25-10h-214v214h-143v-214h-214q-15 0-25 10t-11 26v267q0 1 0 2t0 2l321 264 321-264q1-1 1-4z m124 39l-34-41q-5-5-12-6h-2q-7 0-12 3l-386 322-386-322q-7-4-13-4-7 2-12 7l-35 41q-4 5-3 13t6 12l401 334q18 15 42 15t43-15l136-114v109q0 8 5 13t13 5h107q8 0 13-5t5-13v-227l122-102q5-5 6-12t-4-13z' },
];

export default function App() {
  return (
    <Page>
      <GlobalStyle />
      <TopStrip />
      <Main>
        <Sidebar>
          <Title>Choose Households</Title>
          <FieldLabel>Data Source:</FieldLabel>
          <SourceRow>
            <SourceButton $active $w={56}>PSE</SourceButton>
            <SourceButton $w={68}>LEAD</SourceButton>
          </SourceRow>
          <FieldLabel>Geography:</FieldLabel>
          <RadioList>
            <RadioRow><Radio $on />State/County/Utility</RadioRow>
            <RadioRow><Radio />National</RadioRow>
            <RadioRow><Radio />Metro</RadioRow>
          </RadioList>
          <FieldLabel $top={3}>State:</FieldLabel>
          <StateSelect>
            <Grow>Michigan</Grow>
            <svg width="10" height="10" viewBox="0 0 10 10"><path d="M.5.500l9 9m0-9l-9 9" stroke="#999" strokeWidth="1.300" /></svg>
            <svg width="19" height="10" viewBox="0 0 19 10"><path d="M9 3.500h10l-5 5z" fill="#999" /></svg>
          </StateSelect>
          <FilterStack>
            <FilterButton>Filter by County</FilterButton>
            <FilterButton $nudge={2}>Filter by Utility</FilterButton>
            <FilterButton $nudge={2}>Additional Filters</FilterButton>
          </FilterStack>
          <Rule />
          <ActionRow>
            <ActionButton>Update<br />Figures</ActionButton>
            <ActionButton $disabled>Launch Solutions Tool</ActionButton>
          </ActionRow>
        </Sidebar>
        <Content>
          <Card>
            <CardHeader $h={46} $pad={5}>
              <Phrase $w={133}>Tracts sized by</Phrase>
              <Select $w={320} $mr={10}>Cumulative Affordability Gap, $</Select>
              <Phrase $w={134}>and colored by</Phrase>
              <Select $w={250}>Median Cost Burden, %</Select>
              <DownloadButton><FaDownload /></DownloadButton>
            </CardHeader>
            <Body $h={387}><TractMap /></Body>
          </Card>
          <Card>
            <CardHeader $h={56} $pad={10}>
              <Select $w={120} $mr={5} $lh={32}>Cumulative</Select>
              <Select $w={120} $mr={5} $lh={32}>Cost</Select>
              <Phrase $w={133}>broken down by</Phrase>
              <Select $w={140} $mr={10} $lh={32}>End Use</Select>
              <Phrase $w={219}>for households grouped by</Phrase>
              <Select $w={150} $mr={5} $lh={32}>Education</Select>
              <Phrase $w={35}>and</Phrase>
              <Select $w={150} $lh={32}>Renter/Owner</Select>
              <DownloadButton $lift={5}><FaDownload /></DownloadButton>
            </CardHeader>
            <Body $h={376}><BillsChart /></Body>
            <ModeBar>
              {modeIcons.map((m, i) => (
                <ModeCell key={i} $gap={m.gap} $active={m.active}>
                  <svg width="16" height="16" viewBox={`${(m.w - 1000) / 2} 0 1000 1000`}>
                    <path d={m.d} transform="matrix(1 0 0 -1 0 850)" fill="currentColor" />
                  </svg>
                </ModeCell>
              ))}
            </ModeBar>
          </Card>
        </Content>
      </Main>
      <DevButton>
        <svg width="64" height="64" viewBox="0 0 64 64" fill="none" stroke="#fff" strokeWidth="3.500">
          <path d="M24.500 21.200 14 32 24.500 42.800M39.500 21.200 50 32 39.500 42.800" />
        </svg>
      </DevButton>
    </Page>
  );
}
